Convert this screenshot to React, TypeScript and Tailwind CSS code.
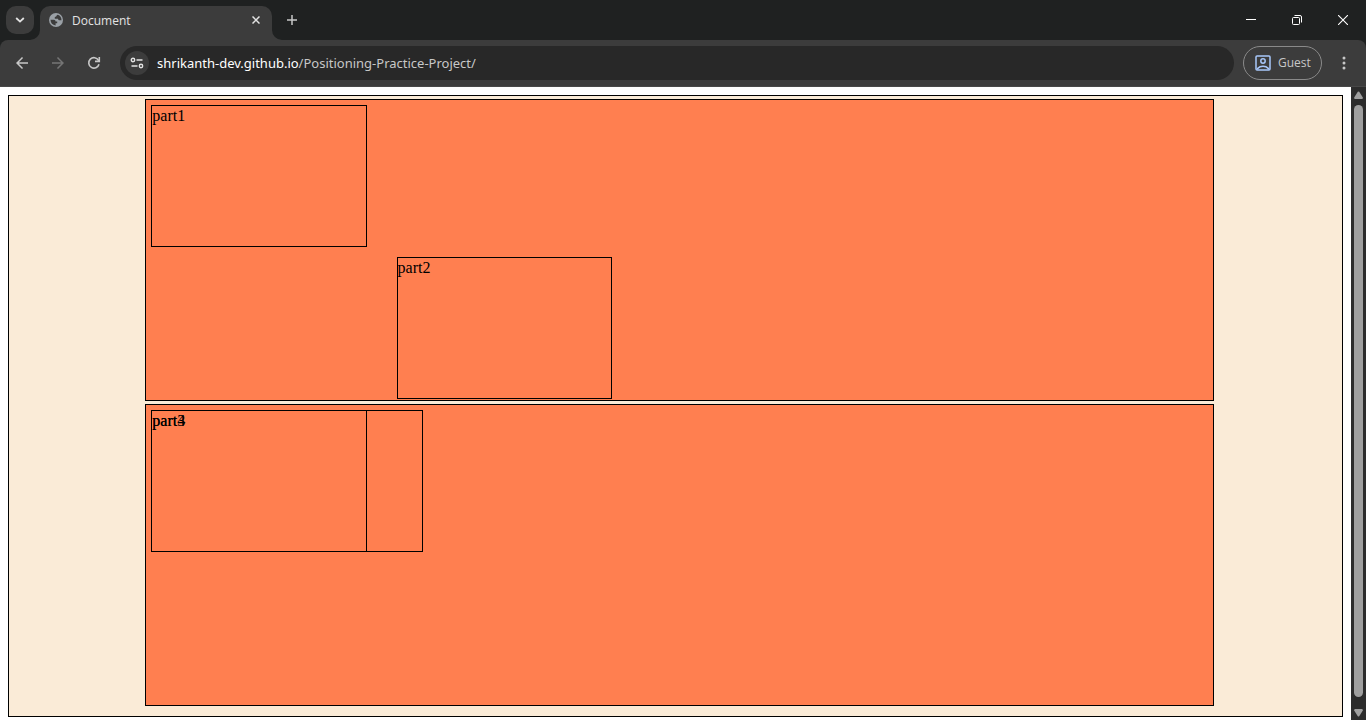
import React from 'react';
import { MdArrowBack, MdArrowForward } from 'react-icons/md';

const iconButton = 'flex size-7 items-center justify-center rounded-full';

function TabStrip() {
  return (
    <header className="flex h-10 items-start bg-[#1f2121] pl-[6px]">
      <button aria-label="Search tabs" className="mt-[6px] flex size-7 items-center justify-center rounded-[10px] bg-[#3c3c3c] text-[#e3e3e3]">
        <svg width="10" height="6" viewBox="0 0 10 6" fill="none" stroke="currentColor" strokeWidth="1.8">
          <path d="M1.2 1 5 4.6 8.8 1" />
        </svg>
      </button>
      <div className="relative mt-[6px] ml-[6px] flex h-[34px] w-[232px] items-center rounded-t-[10px] bg-[#3c3c3c] pr-2 pb-[6px] pl-2">
        <svg className="absolute bottom-0 -left-[10px]" width="10" height="10" viewBox="0 0 10 10" fill="#3c3c3c">
          <path d="M10 0v10H0A10 10 0 0 0 10 0Z" />
        </svg>
        <svg className="absolute -right-[10px] bottom-0" width="10" height="10" viewBox="0 0 10 10" fill="#3c3c3c">
          <path d="M0 0v10h10A10 10 0 0 1 0 0Z" />
        </svg>
        <svg className="shrink-0" width="16" height="16" viewBox="0 0 16 16">
          <circle cx="8" cy="8" r="7" fill="#9aa0a6" />
          <path
            fill="#3c3c3c"
            d="M2.500 7.800H6Q7.600 7.900 7.600 9.600H9.200V11.300H7.600V13.400Q2.800 13 2.500 7.800ZM9.800 2.800Q13.400 4.200 13.500 8.200H11.400Q10.200 8.200 10 6.700H6.800V4.900Q8.500 4.900 8.700 3.600Q9 2.800 9.800 2.800Z"
          />
        </svg>
        <span className="ml-2 grow pt-[2px] text-[12px] leading-4 text-[#e3e3e3]">Document</span>
        <button aria-label="Close tab" className="flex size-4 items-center justify-center text-[#e3e3e3]">
          <svg width="8" height="8" viewBox="0 0 8 8" stroke="currentColor" strokeWidth="1.5">
            <path d="m.5.5 7 7m0-7-7 7" />
          </svg>
        </button>
      </div>
      <button aria-label="New tab" className="mt-[6px] ml-[6px] flex size-7 items-center justify-center text-[#c7c7c7]">
        <svg width="10" height="10" viewBox="0 0 10 10" stroke="currentColor" strokeWidth="1.5">
          <path d="M5 0v10M0 5h10" />
        </svg>
      </button>
      <div className="ml-auto flex h-10 text-white">
        <button aria-label="Minimize" className="flex w-[46px] items-center justify-center">
          <svg width="10" height="10" viewBox="0 0 10 10" stroke="currentColor">
            <path d="M0 4.5h10" />
          </svg>
        </button>
        <button aria-label="Restore" className="flex w-[46px] items-center justify-center">
          <svg width="10" height="10" viewBox="0 0 10 10" fill="none" stroke="currentColor">
            <rect x=".5" y="2.5" width="7" height="7" rx="1" />
            <path d="M2.5.5H8A1.500 1.500 0 0 1 9.500 2v5.500" />
          </svg>
        </button>
        <button aria-label="Close" className="flex w-[46px] items-center justify-center">
          <svg width="10" height="10" viewBox="0 0 10 10" stroke="currentColor" strokeWidth="1.1">
            <path d="m0 0 10 10M10 0 0 10" />
          </svg>
        </button>
      </div>
    </header>
  );
}

function Toolbar() {
  return (
    <div className="bg-[#1f2121]">
      <nav className="flex h-[47px] items-center rounded-t-[8px] border-b border-[#484848] bg-[#3c3c3c] pr-2 pl-2 text-[#c7c7c7]">
        <div className="flex gap-2">
          <button aria-label="Back" className={iconButton}>
            <MdArrowBack className="size-[18px]" />
          </button>
          <button aria-label="Forward" disabled className={iconButton}>
            <MdArrowForward className="size-[18px] text-[#757575]" />
          </button>
          <button aria-label="Reload" className={iconButton}>
            <svg width="14" height="14" viewBox="0 0 14 14" fill="none" stroke="currentColor" strokeWidth="1.6">
              <path d="M12 8.200A5.200 5.200 0 1 1 11.500 4.300L12 5.200" />
              <path d="M12.300 1v4.400H8" />
            </svg>
          </button>
        </div>
        <div className="ml-3 flex h-[34px] grow items-center rounded-full bg-[#282828] pl-[5px]">
          <button aria-label="View site information" className="flex size-6 items-center justify-center rounded-full bg-[#3c3c3c] text-[#e3e3e3]">
            <svg width="14" height="12" viewBox="0 0 14 12" fill="none" stroke="currentColor" strokeWidth="1.4">
              <circle cx="3" cy="3" r="1.700" />
              <path d="M6.500 3h6M1.500 9h6" />
              <circle cx="11" cy="9" r="1.700" />
            </svg>
          </button>
          <a href="#page" className="ml-2 font-['Noto_Sans',sans-serif] text-[13px] leading-5 text-[#c7c7c7]">
            <span className="text-white">shrikanth-dev.github.io</span>/Positioning-Practice-Project/
          </a>
        </div>
        <button className="ml-[9px] flex h-[34px] w-[79px] items-center rounded-full border border-[#8a8a8a] pl-[11px] text-[12px] leading-4">
          <svg width="16" height="16" viewBox="0 0 16 16" fill="none" stroke="#a8c7fa" strokeWidth="1.5">
            <rect x="1" y="1" width="14" height="14" rx="1" />
            <circle cx="8" cy="6" r="2.200" />
            <path d="M2.500 14.500V13.600C5.500 10.600 10.500 10.600 13.500 13.600V14.500" />
          </svg>
          <span className="ml-[7px]">Guest</span>
        </button>
        <button aria-label="Menu" className="ml-2 flex size-7 items-center justify-center">
          <svg width="4" height="14" viewBox="0 0 4 14" fill="currentColor">
            <circle cx="2" cy="2" r="1.500" />
            <circle cx="2" cy="7" r="1.500" />
            <circle cx="2" cy="12" r="1.500" />
          </svg>
        </button>
      </nav>
    </div>
  );
}

const card = 'ml-[calc(10%+3px)] box-content h-[300px] w-4/5 border border-black bg-[#ff7f50]';
const part = 'box-content h-[140px] border border-black';

function Page() {
  return (
    <main
      id="page"
      className="min-w-0 grow overflow-hidden bg-white p-2 font-['Liberation_Serif','Times_New_Roman',serif] text-[16px] leading-5 text-black"
    >
      <div className="flex h-[622px] flex-col gap-[3px] border border-black bg-[#faebd7] pt-[3px]">
        <section className={card}>
          <div className="flex flex-col gap-[10px] pt-[5px]">
            <div className={`${part} ml-[5px] w-1/5`}>part1</div>
            <div className={`${part} ml-[calc(20%+37px)] w-1/5`}>part2</div>
          </div>
        </section>
        <section className={card}>
          <div className="grid grid-cols-1 pt-[5px]">
            <div className={`${part} col-start-1 row-start-1 ml-[5px] w-1/5`}>part3</div>
            <div className={`${part} col-start-1 row-start-1 ml-[5px] w-[270px]`}>part4</div>
          </div>
        </section>
      </div>
    </main>
  );
}

function Scrollbar() {
  return (
    <div className="flex w-[15px] shrink-0 flex-col items-center gap-[6px] bg-[#2c2c2c] pt-1 pb-[3px] text-[#9f9f9f]">
      <svg width="9" height="8" viewBox="0 0 9 8" fill="currentColor">
        <path d="M3.800.8Q4.500 0 5.200.8L8.800 6.500Q9 8 8 8H1Q0 8 .2 6.500Z" />
      </svg>
      <div className="w-[9px] grow rounded-full bg-[#9f9f9f]" />
      <svg className="mt-[6px]" width="9" height="8" viewBox="0 0 9 8" fill="currentColor">
        <path d="M3.800 7.200Q4.500 8 5.200 7.200L8.800 1.500Q9 0 8 0H1Q0 0 .2 1.500Z" />
      </svg>
    </div>
  );
}

export default function App() {
  return (
    <div className="flex h-screen flex-col overflow-hidden font-['Open_Sans','Noto_Sans',sans-serif]">
      <TabStrip />
      <Toolbar />
      <div className="flex min-h-0 grow">
        <Page />
        <Scrollbar />
      </div>
    </div>
  );
}
